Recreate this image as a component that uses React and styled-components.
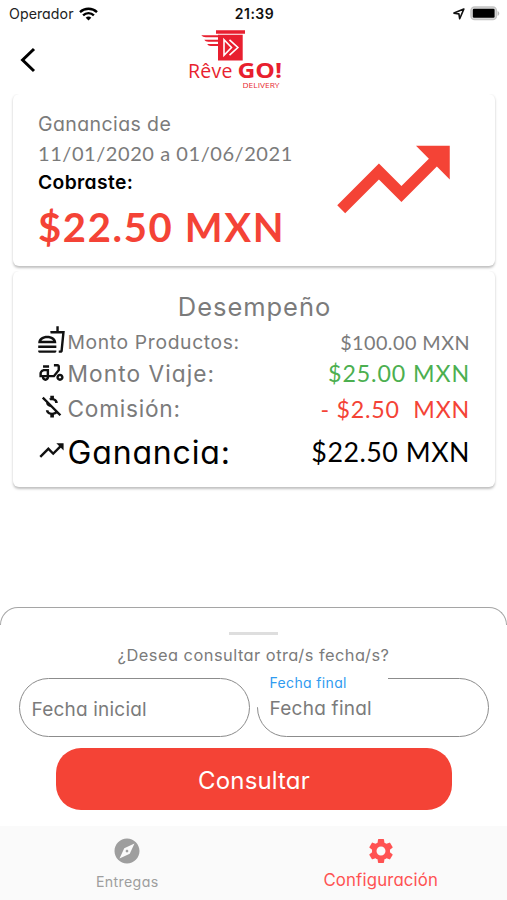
import React from 'react';
import styled, { createGlobalStyle } from 'styled-components';
import {
  MdOutlineFastfood,
  MdOutlineDeliveryDining,
  MdOutlineMoneyOff,
  MdTrendingUp,
  MdExplore,
  MdSettings,
} from 'react-icons/md';

const GlobalStyle = createGlobalStyle`
  * { box-sizing: border-box; }
  body {
    margin: 0;
    background: #fff;
    font-family: Inter, "Noto Sans", sans-serif;
    font-feature-settings: "cv11";
    color: #757575;
  }
`;

const Screen = styled.div`
  width: 507px;
  height: 900px;
  display: flex;
  flex-direction: column;
  overflow: hidden;
  background: #fff;
`;

const Text = styled.span`
  display: block;
  white-space: pre;
  font-family: ${(p) => (p.$numeric ? 'Lato, sans-serif' : 'inherit')};
  font-size: ${(p) => p.$size}px;
  line-height: ${(p) => p.$line}px;
  font-weight: ${(p) => p.$weight || 400};
  letter-spacing: ${(p) => p.$track || 0}px;
  color: ${(p) => p.$color || '#7b7b7b'};
`;

const StatusBar = styled.div`
  height: 27px;
  flex: none;
  display: grid;
  grid-template-columns: 1fr auto 1fr;
  align-items: center;
  padding: 0 7px 0 9px;
`;

const Carrier = styled.div`
  display: flex;
  align-items: center;
  gap: 5px;
`;

const Indicators = styled.div`
  display: flex;
  align-items: center;
  justify-content: flex-end;
  gap: 5px;
`;

const Header = styled.header`
  height: 67px;
  flex: none;
  display: grid;
  grid-template-columns: 161px 110px 1fr;
  padding-left: 19px;
`;

const BackButton = styled.button`
  width: 20px;
  height: 28px;
  margin-top: 19px;
  padding: 0;
  border: 0;
  background: none;
`;

const Card = styled.section`
  flex: none;
  height: ${(p) => p.$height}px;
  margin: 0 12px 5px 13px;
  border-radius: 6px;
  background: #fff;
  box-shadow: 0 1.5px 2.5px rgba(0, 0, 0, 0.25);
  clip-path: inset(0 -6px -6px -6px);
`;

const EarningsCard = styled(Card)`
  display: flex;
  justify-content: space-between;
  padding: 16px 34px 0 25px;
`;

const TrendSlot = styled.div`
  display: flex;
  padding-top: 2px;
  color: #f44336;
`;

const PerformanceCard = styled(Card)`
  padding: 19px 25px 0 24px;
`;

const Title = styled.div`
  display: flex;
  justify-content: center;
  padding: 0 0 3px 2px;
`;

const Row = styled.div`
  height: ${(p) => p.$height}px;
  display: flex;
  align-items: center;
  color: #111;
`;

const RowIcon = styled.span`
  display: flex;
  width: 30.500px;
  flex: none;
  padding-bottom: ${(p) => p.$lift}px;
`;

const Amount = styled.div`
  margin-left: auto;
  padding-bottom: ${(p) => p.$lift || 0}px;
`;

const Sheet = styled.section`
  margin-top: auto;
  height: 219px;
  flex: none;
  display: flex;
  flex-direction: column;
  align-items: center;
`;

const SheetEdge = styled.div`
  width: 100%;
  height: 18px;
  border: 1.5px solid #a5a5a5;
  border-bottom: 0;
  border-radius: 18px 18px 0 0;
`;

const Handle = styled.div`
  width: 49px;
  height: 3px;
  margin: 7px 0 9px;
  background: #dedede;
`;

const Fields = styled.div`
  width: 100%;
  display: grid;
  grid-template-columns: 231px 232px;
  column-gap: 7px;
  padding: 11px 0 11px 19px;
`;

const Field = styled.div`
  position: relative;
  height: 59px;
  padding: 4px 0 0 11.5px;
  display: flex;
  align-items: center;
  border: 1.5px solid #8c8c8c;
  border-radius: 30px;
`;

const FloatingLabel = styled.div`
  position: absolute;
  left: -2px;
  top: -6px;
  width: 132px;
  height: 34px;
  padding-left: 13.500px;
  background: #fff;
`;

const FieldValue = styled.div`
  position: relative;
  padding-bottom: ${(p) => p.$lift || 0}px;
`;

const SubmitButton = styled.button`
  width: 396px;
  height: 62px;
  margin-right: -1px;
  padding: 3px 0 0;
  display: flex;
  align-items: center;
  justify-content: center;
  border: 0;
  border-radius: 25px;
  background: #f44336;
  font: inherit;
  font-feature-settings: inherit;
`;

const TabBar = styled.nav`
  height: 74px;
  flex: none;
  display: grid;
  grid-template-columns: 1fr 1fr;
  background: #fafafa;
`;

const Tab = styled.div`
  display: flex;
  flex-direction: column;
  align-items: center;
  padding: 10px 0 0 1px;
  color: ${(p) => p.$color};
`;

function WifiIcon() {
  return (
    <svg width="19" height="14" viewBox="0 0 19 14" fill="none" stroke="#000" strokeWidth="2.4">
      <path d="M1 5.1C5.7.7 13.3.7 18 5.1" />
      <path d="M4.1 8.3c3-2.9 7.8-2.9 10.8 0" />
      <path d="M6.7 10.8c1.6-1.6 4-1.6 5.6 0L9.5 13.6z" fill="#000" stroke="none" />
    </svg>
  );
}

function LocationIcon() {
  return (
    <svg width="12" height="12" viewBox="0 0 12 12" fill="none" stroke="#111" strokeWidth="1.6" strokeLinejoin="round">
      <path d="M10.8 1.1 1 5.1l4.9.8.8 4.9z" />
    </svg>
  );
}

function BatteryIcon() {
  return (
    <svg width="30" height="15" viewBox="0 0 30 15">
      <rect x="1" y="1" width="25.400" height="12.600" rx="3.6" fill="#ddd" stroke="#c4c4c4" strokeWidth="1.5" />
      <rect x="2.8" y="2.8" width="21.800" height="9" rx="1.2" fill="#000" />
      <path d="M27.600 5v4.8c2.2-.7 2.2-4.1 0-4.8" fill="#b8b8b8" />
    </svg>
  );
}

function Logo() {
  return (
    <svg width="110" height="66" viewBox="180 27 110 66">
      <g fill="#e81f2f">
        <path d="M216 30.3h29v3.4h-29zM218 34.7h24.7v25.8H218z" />
        <path d="M201.3 35.2h16.9v2h-12.4c-2 0-3.5-.7-4.5-2zM204.3 39.7h13.9v2h-9.8c-2 0-3.4-.8-4.1-2zM207.2 43.9h11v2h-7.4c-1.8 0-2.900-.8-3.600-2z" />
      </g>
      <g fill="none" stroke="#fff" strokeWidth="1.6">
        <path d="M224 39.8v15.4l7.500-7.700z" />
        <path d="m229.500 39.8 8.400 7.700-8.400 7.700" />
      </g>
      <g fill="#e81f2f" fontFamily="Open Sans">
        <text x="188" y="78.3" fontSize="19.5" textLength="44.5">Rêve</text>
        <text x="237.500" y="78.3" fontSize="21.5" fontWeight="700" textLength="44.5" lengthAdjust="spacingAndGlyphs">GO!</text>
        <text x="242.500" y="88" fontSize="7.800" textLength="37" lengthAdjust="spacingAndGlyphs">DELIVERY</text>
      </g>
    </svg>
  );
}

export default function App() {
  return (
    <Screen>
      <GlobalStyle />
      <StatusBar>
        <Carrier>
          <Text $size={14.2} $line={27} $track={0.05} $color="#222">Operador</Text>
          <WifiIcon />
        </Carrier>
        <Text $size={14} $line={27} $weight={600} $track={0.5} $color="#111">21:39</Text>
        <Indicators>
          <LocationIcon />
          <BatteryIcon />
        </Indicators>
      </StatusBar>

      <Header>
        <BackButton aria-label="Atrás">
          <svg width="20" height="28" viewBox="0 0 20 28" fill="none" stroke="#000" strokeWidth="3">
            <path d="M15 3 3.6 14 15 25" />
          </svg>
        </BackButton>
        <Logo />
      </Header>

      <EarningsCard $height={172}>
        <div>
          <Text $size={19.5} $line={29} $track={0.4}>Ganancias de</Text>
          <Text $size={20} $line={28} $track={0.56} $numeric>11/01/2020 a 01/06/2021</Text>
          <Text $size={19.3} $line={30} $weight={600} $track={0.35} $color="#000">Cobraste:</Text>
          <Text $size={40} $line={60} $weight={700} $track={1.65} $color="#f44336" $numeric>$22.50 MXN</Text>
        </div>
        <TrendSlot>
          <MdTrendingUp size={135} />
        </TrendSlot>
      </EarningsCard>

      <PerformanceCard $height={216}>
        <Title>
          <Text $size={25.5} $line={33} $track={0.95}>Desempeño</Text>
        </Title>
        <Row $height={32}>
          <RowIcon $lift={5}><MdOutlineFastfood size={29} /></RowIcon>
          <Text $size={19.3} $line={32} $track={0.65}>Monto Productos:</Text>
          <Amount $lift={1}><Text $size={19.8} $line={32} $track={0.45} $numeric>$100.00 MXN</Text></Amount>
        </Row>
        <Row $height={32}>
          <RowIcon $lift={4}><MdOutlineDeliveryDining size={29} /></RowIcon>
          <Text $size={22.7} $line={32} $track={1.05}>Monto Viaje:</Text>
          <Amount $lift={2}><Text $size={23.2} $line={32} $track={0.9} $color="#4caf50" $numeric>$25.00 MXN</Text></Amount>
        </Row>
        <Row $height={38}>
          <RowIcon $lift={5}><MdOutlineMoneyOff size={29} /></RowIcon>
          <Text $size={22.7} $line={38} $track={0.75}>Comisión:</Text>
          <Amount><Text $size={23.2} $line={38} $track={0.8} $color="#f44336" $numeric>- $2.50  MXN</Text></Amount>
        </Row>
        <Row $height={50}>
          <RowIcon $lift={6}><MdTrendingUp size={29} /></RowIcon>
          <Text $size={32} $line={52} $track={0.85} $color="#000">Ganancia:</Text>
          <Amount $lift={2}><Text $size={26.8} $line={50} $track={0.5} $color="#000" $numeric>$22.50 MXN</Text></Amount>
        </Row>
      </PerformanceCard>

      <Sheet>
        <SheetEdge />
        <Handle />
        <Text $size={16.4} $line={23} $track={0.48}>¿Desea consultar otra/s fecha/s?</Text>
        <Fields>
          <Field>
            <FieldValue><Text $size={19} $line={28} $track={0.2}>Fecha inicial</Text></FieldValue>
          </Field>
          <Field>
            <FloatingLabel>
              <Text $size={14} $line={20} $track={0.35} $color="#2f9bf0">Fecha final</Text>
            </FloatingLabel>
            <FieldValue $lift={2}><Text $size={19} $line={26} $track={0.25}>Fecha final</Text></FieldValue>
          </Field>
        </Fields>
        <SubmitButton>
          <Text $size={24} $line={34} $track={0.15} $color="#fff">Consultar</Text>
        </SubmitButton>
      </Sheet>

      <TabBar>
        <Tab $color="#9e9e9e">
          <MdExplore size={30} />
          <Text $size={14.2} $line={31} $track={0.35} $color="#9e9e9e">Entregas</Text>
        </Tab>
        <Tab $color="#ff5252">
          <MdSettings size={30} />
          <Text $size={16.8} $line={28} $track={0.15} $color="#ff5252">Configuración</Text>
        </Tab>
      </TabBar>
    </Screen>
  );
}
